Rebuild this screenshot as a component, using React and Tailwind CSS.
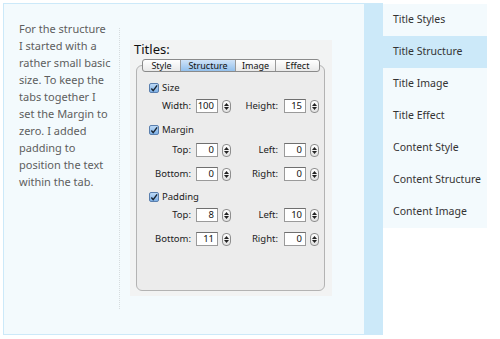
import React from "react";

const font = { fontFamily: '"Noto Sans", "DejaVu Sans", sans-serif' };

function Checkbox({ label }) {
  return (
    <div className="flex items-center h-[12px]">
      <div className="w-[10px] h-[10px] rounded-[2px] border border-[#5a7fae] bg-gradient-to-b from-[#bcd9f6] to-[#7fb1e6] flex items-center justify-center">
        <svg width="9" height="9" viewBox="0 0 9 9">
          <path d="M1.5 4.5 L3.6 7 L8 1" fill="none" stroke="#1a2430" strokeWidth="1.6" />
        </svg>
      </div>
      <span className="ml-[3px] text-[9.5px] text-[#222] leading-none">{label}</span>
    </div>
  );
}

function Stepper() {
  return (
    <div className="w-[9px] h-[13px] rounded-[4px] border border-[#8e8e8e] bg-gradient-to-b from-white to-[#e2e2e2] flex flex-col items-center justify-center gap-[1px]">
      <svg width="5" height="3" viewBox="0 0 5 3"><path d="M0 3 L2.5 0 L5 3Z" fill="#222" /></svg>
      <svg width="5" height="3" viewBox="0 0 5 3"><path d="M0 0 L2.5 3 L5 0Z" fill="#222" /></svg>
    </div>
  );
}

function Field({ value }) {
  return (
    <div className="w-[22px] h-[14px] bg-white border border-[#9a9a9a] border-t-[#6f6f6f] flex items-center justify-end pr-[3px] text-[9.5px] text-[#111] leading-none">
      {value}
    </div>
  );
}

function FieldRow({ l1, v1, l2, v2, className = "" }) {
  return (
    <div className={"flex items-center h-[14px] text-[9.5px] text-[#222] " + className}>
      <span className="w-[42px] text-right leading-none">{l1}</span>
      <div className="ml-[5px]"><Field value={v1} /></div>
      <div className="ml-[4px]"><Stepper /></div>
      <span className="w-[47px] text-right leading-none">{l2}</span>
      <div className="ml-[6px]"><Field value={v2} /></div>
      <div className="ml-[4px]"><Stepper /></div>
    </div>
  );
}

const tabs = [
  { name: "Style", w: "w-[37px]" },
  { name: "Structure", w: "w-[55px]", active: true },
  { name: "Image", w: "w-[40px]" },
  { name: "Effect", w: "w-[44px]" },
];

const nav = [
  "Title Styles",
  "Title Structure",
  "Title Image",
  "Title Effect",
  "Content Style",
  "Content Structure",
  "Content Image",
];

const lines = [
  "For the structure",
  "I started with a",
  "rather small basic",
  "size. To keep the",
  "tabs together I",
  "set the Margin to",
  "zero. I added",
  "padding to",
  "position the text",
  "within the tab.",
];

export default function App() {
  return (
    <div className="w-[500px] h-[339px] bg-white overflow-hidden" style={font}>
      <div className="flex items-start pt-[3px] pl-[3px]">
        <div className="bg-[#cce9f9] pl-px pt-px pb-px pr-[19px]">
          <div className="w-[360px] h-[330px] bg-[#f3fafd] flex items-start pl-[15px] pt-[16px]">
            <div className="w-[100px] text-[11px] leading-[17px] text-[#5e5e5e]">
              {lines.map((l) => (
                <div key={l} className="whitespace-nowrap">{l}</div>
              ))}
            </div>
            <div className="mt-[8px] h-[281px] border-l border-dotted border-[#d6dcdf] pl-[10px] pt-[12px]">
              <div className="w-[202px] h-[256px] bg-[#f2f3f3] flex flex-col">
                <div className="pl-[4px] pt-[1px] text-[13px] leading-[16px] text-[#111]">Titles:</div>
                <div className="relative z-10 flex ml-[12px] mt-[2px] h-[13px] rounded-[3px] border border-[#8a8a8a] bg-gradient-to-b from-white to-[#e9e9e9] w-[178px] overflow-hidden">
                  {tabs.map((t, i) => (
                    <div
                      key={t.name}
                      className={
                        t.w +
                        " flex items-center justify-center text-[9px] leading-none text-[#111] " +
                        (i > 0 ? "border-l border-[#9a9a9a] " : "") +
                        (t.active ? "bg-gradient-to-b from-[#cfe3f8] to-[#93c0ec]" : "")
                      }
                    >
                      {t.name}
                    </div>
                  ))}
                </div>
                <div className="-mt-[7px] ml-[6px] w-[189px] h-[226px] rounded-[6px] border border-[#b3b3b3] bg-[#ececec] pt-[16px] pl-[12px]">
                  <Checkbox label="Size" />
                  <FieldRow l1="Width:" v1="100" l2="Height:" v2="15" className="mt-[5px]" />
                  <div className="mt-[11px]"><Checkbox label="Margin" /></div>
                  <FieldRow l1="Top:" v1="0" l2="Left:" v2="0" className="mt-[7px]" />
                  <FieldRow l1="Bottom:" v1="0" l2="Right:" v2="0" className="mt-[10px]" />
                  <div className="mt-[10px]"><Checkbox label="Padding" /></div>
                  <FieldRow l1="Top:" v1="8" l2="Left:" v2="10" className="mt-[5px]" />
                  <FieldRow l1="Bottom:" v1="11" l2="Right:" v2="0" className="mt-[10px]" />
                </div>
              </div>
            </div>
          </div>
        </div>
        <div className="w-[104px] mt-px bg-[#f3fafd] flex flex-col">
          {nav.map((n) => (
            <div
              key={n}
              className={
                "h-[32px] flex items-center pl-[10px] text-[10.5px] text-[#333] whitespace-nowrap " +
                (n === "Title Structure" ? "bg-[#cce9f9]" : "")
              }
            >
              {n}
            </div>
          ))}
        </div>
      </div>
    </div>
  );
}
